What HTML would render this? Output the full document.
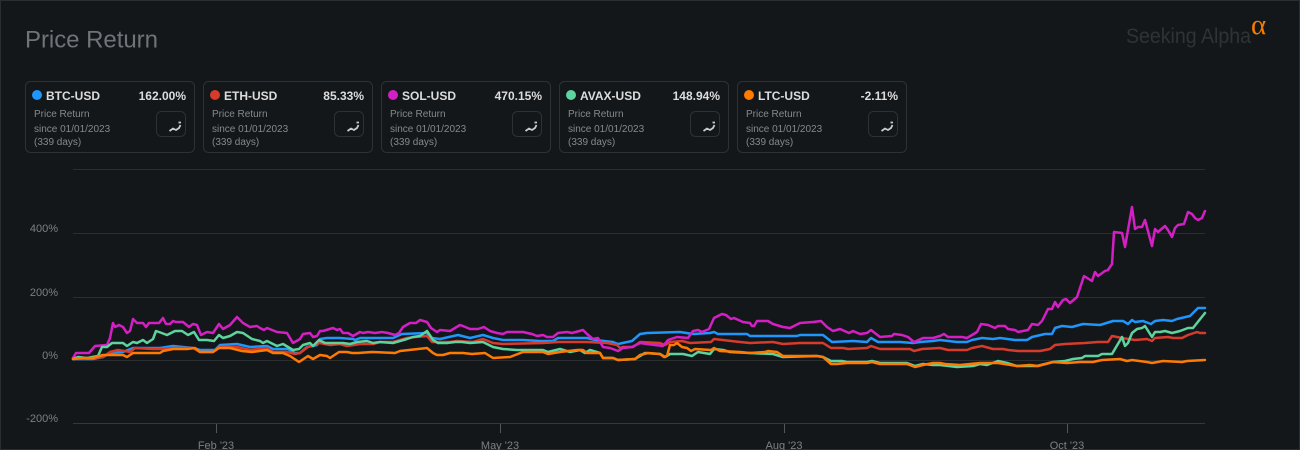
<!DOCTYPE html>
<html><head><meta charset="utf-8"><style>
html,body{margin:0;padding:0;background:#14171a;width:1300px;height:450px;overflow:hidden}
svg{display:block}
text{font-family:"Liberation Sans",sans-serif}
.n{font-size:12px;font-weight:bold;fill:#dcdcdc}
.s{font-size:10px;fill:#85898c}
.a{font-size:11px;fill:#7c8083}
.l{fill:none;stroke-width:2.500;stroke-linejoin:round;stroke-linecap:round}
</style></head><body>
<svg width="1300" height="450" viewBox="0 0 1300 450" xmlns="http://www.w3.org/2000/svg">
<rect width="1300" height="450" fill="#14171a"/>
<rect x="0.5" y="0.5" width="1299" height="449" fill="none" stroke="#2b2e31"/>
<text x="25" y="47.5" font-size="24" fill="#6e7477" textLength="133">Price Return</text>
<text x="1126" y="43" font-size="21" fill="#303336" textLength="125" lengthAdjust="spacingAndGlyphs">Seeking Alpha</text>
<text x="1251" y="34" style="font-family:'Liberation Serif',serif" font-size="29" fill="#f57c00">α</text>

<defs>
<g id="c">
<rect x="25.5" y="81.5" width="169" height="71" rx="5" fill="none" stroke="#2e3134"/>
<text x="34" y="117" class="s">Price Return</text>
<text x="34" y="132" class="s">since 01/01/2023</text>
<text x="34" y="145" class="s">(339 days)</text>
<rect x="156.5" y="111.5" width="29" height="25" rx="5" fill="none" stroke="#2e3134"/>
<path d="M169.500 131L173 128.500L176 130L179 128L180.500 125M178.500 122.500H181" fill="none" stroke="#c9cbcc" stroke-width="1.800"/>
</g>
</defs>
<use href="#c"/><use href="#c" x="178"/><use href="#c" x="356"/><use href="#c" x="534"/><use href="#c" x="712"/>

<circle cx="37" cy="95" r="5" fill="#1e96fc"/><text x="46" y="100" class="n">BTC-USD</text><text x="186" y="100" class="n" text-anchor="end">162.00%</text>
<circle cx="215" cy="95" r="5" fill="#d63b2b"/><text x="224" y="100" class="n">ETH-USD</text><text x="364" y="100" class="n" text-anchor="end">85.33%</text>
<circle cx="393" cy="95" r="5" fill="#d41fc4"/><text x="402" y="100" class="n">SOL-USD</text><text x="542" y="100" class="n" text-anchor="end">470.15%</text>
<circle cx="571" cy="95" r="5" fill="#5dd39e"/><text x="580" y="100" class="n">AVAX-USD</text><text x="720" y="100" class="n" text-anchor="end">148.94%</text>
<circle cx="749" cy="95" r="5" fill="#ff7a00"/><text x="758" y="100" class="n">LTC-USD</text><text x="898" y="100" class="n" text-anchor="end">-2.11%</text>

<g stroke="#2b2e31" stroke-width="1">
<path d="M73 169.500H1205M73 233.500H1205M73 297.500H1205M73 360.500H1205"/>
<path d="M73 423.500H1205" stroke="#35383b"/>
<path d="M216.500 424V433M500.500 424V433M784.500 424V433M1067.500 424V433" stroke="#55585b"/>
</g>
<text x="58" y="232" class="a" text-anchor="end">400%</text>
<text x="58" y="296" class="a" text-anchor="end">200%</text>
<text x="58" y="359" class="a" text-anchor="end">0%</text>
<text x="58" y="422" class="a" text-anchor="end">-200%</text>
<text x="216" y="449" class="a" text-anchor="middle">Feb '23</text>
<text x="500" y="449" class="a" text-anchor="middle">May '23</text>
<text x="784" y="449" class="a" text-anchor="middle">Aug '23</text>
<text x="1067" y="449" class="a" text-anchor="middle">Oct '23</text>

<polyline class="l" stroke="#1e96fc" points="73,359 93,359 103,357 110,353 123,352 133,348 160,348 173,346 193,348 200,350 215,350 220,345 237,344 250,347 267,346 273,349 288,349 295,353 300,353 307,347 317,345 320,339 327,338 340,338 353,339 355,340 360,338 373,338 393,338 402,334 427,333 432,338 440,339 458,335 470,338 483,335 493,338 503,340 523,340 540,341 553,341 558,338 587,338 595,340 613,342 618,344 632,341 640,334 647,333 680,332 693,334 710,333 714,332 718,334 747,334 750,336 773,336 797,336 800,335 823,335 832,342 853,341 867,342 871,338 878,342 900,342 913,343 920,342 933,341 940,340 957,342 967,342 972,340 982,338 993,339 1000,338 1015,340 1027,340 1032,337 1045,334 1052,334 1055,328 1062,326 1072,327 1083,324 1100,325 1113,321 1123,321 1128,324 1132,320 1135,322 1143,321 1151,324 1155,321 1163,320 1172,321 1177,319 1190,316 1198,308 1205,308"/>
<polyline class="l" stroke="#d63b2b" points="73,359 93,358 103,357 110,352 118,350 130,352 135,348 153,349 163,349 173,348 193,348 200,352 213,352 220,347 237,347 250,350 267,348 273,352 287,352 295,354 300,353 308,347 320,343 330,345 340,344 347,346 360,344 373,344 380,342 393,342 407,338 415,337 427,336 432,342 450,342 457,341 473,342 483,339 493,343 503,344 543,343 558,342 587,342 607,343 617,345 620,348 623,347 633,347 640,342 660,343 665,345 670,342 682,341 690,343 711,342 714,339 740,342 750,343 773,342 783,344 800,343 823,343 831,348 843,348 848,349 867,348 871,346 880,349 910,349 914,351 922,349 940,348 948,350 967,350 972,348 982,346 993,349 1003,349 1008,350 1018,351 1028,351 1040,351 1050,349 1055,345 1065,344 1085,343 1098,342 1108,342 1112,336 1122,338 1135,340 1147,339 1152,341 1155,338 1168,337 1173,338 1182,338 1188,335 1197,332 1200,333 1205,333"/>
<polyline class="l" stroke="#d41fc4" points="73,358 76,353 89,353 95,346 107,345 110,338 113,323 115,327 119,325 123,327 127,333 130,331 133,319 137,323 143,323 146,327 149,323 159,323 163,318 166,324 170,324 173,321 176,322 183,322 189,327 193,324 197,325 201,335 207,332 213,333 219,324 223,329 230,325 237,317 243,323 250,327 257,326 260,328 264,330 267,328 277,332 287,333 293,343 300,339 303,334 310,333 313,337 317,336 320,331 323,331 333,328 337,330 340,329 343,333 348,333 353,336 360,332 363,333 368,332 375,333 382,332 388,333 395,335 399,333 403,327 410,323 416,323 420,320 427,322 431,328 437,332 440,330 450,331 460,325 463,326 470,329 478,329 484,327 490,331 497,333 503,334 507,332 523,332 532,334 537,336 543,335 547,337 553,337 558,333 567,332 572,333 583,330 587,334 593,339 598,338 603,347 610,348 618,351 623,348 632,347 640,343 647,344 663,346 668,340 677,337 688,338 693,331 698,330 702,332 709,329 714,318 722,314 726,315 731,319 734,318 743,322 750,323 752,326 754,326 757,321 768,321 773,324 783,327 790,328 800,323 813,322 821,321 827,327 833,331 840,329 849,333 853,331 860,334 867,333 871,330 880,337 892,336 894,334 902,335 908,337 914,342 923,338 933,338 940,336 944,334 948,337 962,337 967,338 972,335 977,332 981,324 988,325 995,328 998,326 1005,326 1008,329 1015,330 1018,332 1028,330 1032,324 1038,325 1042,321 1048,309 1052,309 1055,302 1058,307 1063,300 1066,299 1070,303 1077,297 1084,276 1092,281 1095,272 1098,276 1105,271 1108,270 1112,264 1114,232 1122,233 1125,247 1132,207 1135,229 1138,227 1142,227 1145,220 1152,246 1155,229 1158,232 1165,226 1168,230 1172,237 1175,228 1178,225 1184,224 1188,212 1192,214 1195,218 1198,220 1202,218 1205,211"/>
<polyline class="l" stroke="#5dd39e" points="73,359 78,357 87,358 98,356 102,347 107,347 112,343 123,343 127,346 133,342 137,343 143,340 147,343 153,339 156,331 159,332 167,335 175,331 182,331 188,335 194,332 199,340 207,340 214,341 219,335 223,338 230,336 237,332 243,333 252,339 260,341 263,343 267,341 277,346 283,344 293,350 299,349 303,345 310,343 313,346 319,340 325,343 332,343 343,343 350,344 357,342 367,341 373,343 380,342 393,343 407,339 413,337 420,336 427,331 433,340 438,343 447,343 455,342 462,342 470,343 483,342 493,347 503,349 517,350 543,350 548,352 560,349 570,352 580,350 585,353 590,350 600,353 603,358 613,358 618,360 635,359 640,356 645,353 660,354 665,357 670,354 683,354 692,356 698,352 710,354 714,349 723,350 730,352 750,353 773,354 783,357 817,356 823,357 831,361 842,361 847,362 867,362 872,361 880,363 907,363 915,366 923,364 933,365 940,365 957,367 973,366 980,364 987,365 998,361 1007,363 1017,366 1037,366 1053,362 1065,361 1073,359 1082,358 1085,356 1098,356 1102,354 1112,354 1122,337 1125,346 1128,343 1132,333 1137,329 1142,328 1145,326 1152,337 1155,332 1160,332 1165,331 1172,333 1180,331 1188,328 1193,328 1205,313"/>
<polyline class="l" stroke="#ff7a00" points="73,359 83,358 93,358 103,355 123,355 127,357 133,353 147,353 160,353 163,351 173,349 187,349 195,348 200,352 213,352 219,348 230,348 242,351 252,352 267,350 273,353 283,353 290,356 299,362 308,356 313,359 320,355 327,356 330,358 339,352 347,352 352,353 358,353 372,352 395,353 400,351 418,349 427,348 433,353 437,355 443,355 450,353 463,353 472,354 485,353 493,358 510,357 523,352 543,352 548,354 560,352 577,350 583,350 587,353 600,353 603,358 613,358 618,360 635,359 640,355 648,353 660,354 664,357 667,356 670,345 674,345 677,343 682,347 687,348 691,351 695,349 711,350 714,348 720,351 740,352 750,353 765,352 768,351 777,352 783,356 817,356 823,357 831,364 837,364 847,363 867,363 872,362 880,364 907,364 915,367 923,365 933,363 940,363 945,364 960,365 980,363 998,363 1017,366 1030,365 1038,366 1053,362 1067,363 1080,362 1093,362 1102,360 1120,359 1127,361 1132,360 1147,362 1152,363 1163,361 1182,362 1187,361 1205,360"/>
</svg>
</body></html>
